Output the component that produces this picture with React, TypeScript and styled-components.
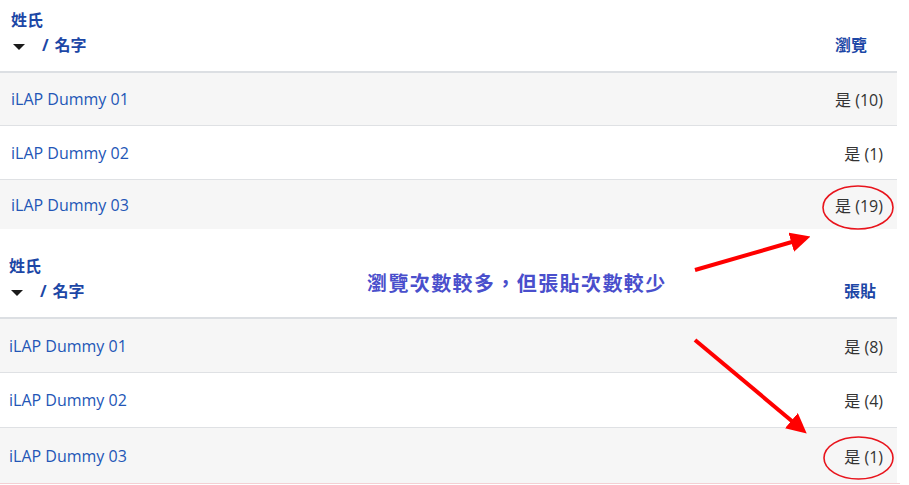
import React from "react";
import styled, { createGlobalStyle } from "styled-components";

const Global = createGlobalStyle`
  html, body { margin: 0; padding: 0; background: #ffffff; }
  body { font-family: "Open Sans", "Noto Sans CJK TC", sans-serif; }
`;

const Page = styled.div`
  position: relative;
  width: 909px;
  height: 485px;
  overflow: hidden;
  background: #fff;
`;

const Sheet = styled.div`
  width: 897px;
  display: flex;
  flex-direction: column;
`;

const Table = styled.div<{ $pl: number }>`
  display: flex;
  flex-direction: column;
  --pl: ${(p) => p.$pl}px;
`;

const Header = styled.div<{ $pt: number; $pr: number }>`
  display: flex;
  justify-content: space-between;
  align-items: flex-end;
  padding: ${(p) => p.$pt}px ${(p) => p.$pr}px 13px var(--pl);
  border-bottom: 2px solid #dcdfe3;
  color: #1d47a6;
  font-weight: 700;
  font-size: 16px;
  line-height: 25px;
`;

const NameHead = styled.div`
  display: flex;
  flex-direction: column;
`;

const SortLine = styled.div`
  display: flex;
  align-items: center;
`;

const Caret = styled.span`
  display: inline-block;
  width: 0;
  height: 0;
  margin: 2px 17px 0 2px;
  border-left: 6px solid transparent;
  border-right: 6px solid transparent;
  border-top: 6px solid #1a1a1a;
`;

const Slash = styled.span`
  margin-right: 6px;
`;

const Row = styled.div<{ $alt: boolean; $h: number; $last?: boolean }>`
  display: flex;
  justify-content: space-between;
  align-items: center;
  height: ${(p) => p.$h}px;
  padding: 0 14px 0 var(--pl);
  background: ${(p) => (p.$alt ? "#f6f6f6" : "#ffffff")};
  border-bottom: ${(p) => (p.$last ? "none" : "1px solid #dfe1e4")};
  font-size: 16px;
`;

const NameLink = styled.span`
  color: #2356b6;
`;

const Value = styled.span`
  color: #333333;
`;

const BottomRule = styled.div`
  position: absolute;
  left: 0;
  top: 483px;
  width: 900px;
  height: 1px;
  background: #f5cfd3;
`;

const Note = styled.div`
  position: absolute;
  left: 367px;
  top: 268px;
  color: #4a4fcc;
  font-family: "Noto Sans CJK TC", sans-serif;
  font-weight: 700;
  font-size: 20px;
  line-height: 30px;
  letter-spacing: 1.4px;
  white-space: nowrap;
`;

const Overlay = styled.svg`
  position: absolute;
  left: 0;
  top: 0;
  pointer-events: none;
`;

type Item = { name: string; value: string };

const views: Item[] = [
  { name: "iLAP Dummy 01", value: "是 (10)" },
  { name: "iLAP Dummy 02", value: "是 (1)" },
  { name: "iLAP Dummy 03", value: "是 (19)" },
];

const posts: Item[] = [
  { name: "iLAP Dummy 01", value: "是 (8)" },
  { name: "iLAP Dummy 02", value: "是 (4)" },
  { name: "iLAP Dummy 03", value: "是 (1)" },
];

function DataTable({
  col,
  items,
  pl,
  pt,
  pr,
  heights,
}: {
  col: string;
  items: Item[];
  pl: number;
  pt: number;
  pr: number;
  heights: number[];
}) {
  return (
    <Table $pl={pl}>
      <Header $pt={pt} $pr={pr}>
        <NameHead>
          <span>姓氏</span>
          <SortLine>
            <Caret />
            <Slash>/</Slash>
            <span>名字</span>
          </SortLine>
        </NameHead>
        <span>{col}</span>
      </Header>
      {items.map((it, i) => (
        <Row key={it.name} $alt={i % 2 === 0} $h={heights[i]} $last={i === items.length - 1}>
          <NameLink>{it.name}</NameLink>
          <Value>{it.value}</Value>
        </Row>
      ))}
    </Table>
  );
}

export default function App() {
  return (
    <Page>
      <Global />
      <Sheet>
        <DataTable col="瀏覽" items={views} pl={11} pt={8} pr={30} heights={[52, 53, 49]} />
        <DataTable col="張貼" items={posts} pl={9} pt={25} pr={21} heights={[53, 54, 55]} />
      </Sheet>
      <BottomRule />
      <Note>瀏覽次數較多，但張貼次數較少</Note>
      <Overlay width="909" height="485" viewBox="0 0 909 485">
        <defs>
          <marker id="head" markerWidth="5" markerHeight="5" refX="1.5" refY="2.5" orient="auto" markerUnits="strokeWidth">
            <path d="M0,0 L5,2.5 L0,5 Z" fill="#ff0000" />
          </marker>
        </defs>
        <line x1="695" y1="270" x2="797" y2="240.5" stroke="#ff0000" strokeWidth="4" markerEnd="url(#head)" />
        <line x1="695" y1="340" x2="796" y2="424.5" stroke="#ff0000" strokeWidth="4" markerEnd="url(#head)" />
        <ellipse cx="858" cy="207.5" rx="35" ry="21.5" fill="none" stroke="#e8141c" strokeWidth="1.6" />
        <ellipse cx="858.5" cy="458" rx="34.5" ry="21" fill="none" stroke="#e8141c" strokeWidth="1.6" />
      </Overlay>
    </Page>
  );
}
